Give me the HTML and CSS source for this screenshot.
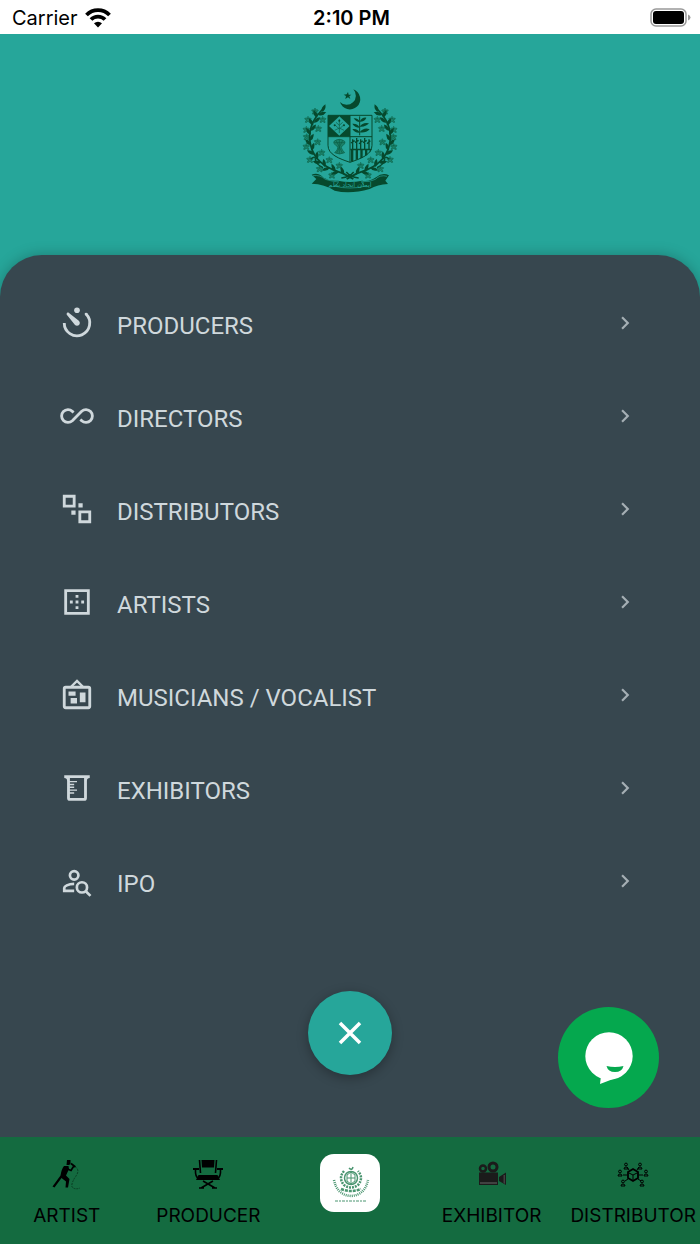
FILE: index.html
```html
<!DOCTYPE html>
<html lang="en">
<head>
    <meta charset="UTF-8">
    <meta name="viewport" content="width=device-width, initial-scale=1.0">
    <title>Menu</title>
    <link rel="stylesheet" href="styles.css">
</head>
<body>
    <div class="status-bar">
        <div class="carrier">
            <span>Carrier</span>
            <svg class="wifi" viewBox="0 0 26 20" aria-hidden="true">
                <path d="M1.500 7A16 16 0 0 1 24.500 7M6 11.500A9.800 9.800 0 0 1 20 11.500" fill="none" stroke="#000" stroke-width="3.800"/>
                <path d="M13 19.500L9 15.300A6 6 0 0 1 17 15.300Z"/>
            </svg>
        </div>
        <div class="clock">2:10 PM</div>
        <svg class="battery" viewBox="0 0 41 20" aria-hidden="true">
            <rect x="1" y="1" width="35" height="17" rx="5" fill="none" stroke="#999" stroke-width="1.500"/>
            <rect x="3" y="3" width="31" height="13" rx="3"/>
            <path d="M38 6.500Q40.500 7.500 40.500 9.500T38 12.500Z" fill="#999"/>
        </svg>
    </div>

    <header class="hero">
        <svg class="emblem" viewBox="30 21 300 330" role="img" aria-label="State emblem">
            <defs>
                <path id="leaf" d="M0 3Q10 -7 0 -22Q-10 -7 0 3Z"/>
                <path id="flower" d="M0 -3Q-4 -8 0 -11Q4 -8 0 -3Q6 -9 10 -4Q8 1 3 0Q9 3 7 8Q2 8 0 3Q-3 9 -8 7Q-8 2 -3 0Q-10 0 -10 -5Q-5 -8 0 -3Z" fill="#1b8269" stroke="#0b5c43" stroke-width="1.500"/>
                <g id="branch">
                    <use href="#flower" x="75" y="95"/>
                    <use href="#flower" x="54" y="120"/>
                    <use href="#flower" x="98" y="120"/>
                    <use href="#flower" x="85" y="147"/>
                    <use href="#flower" x="49" y="150"/>
                    <use href="#flower" x="83" y="187"/>
                    <use href="#flower" x="50" y="172"/>
                    <use href="#flower" x="49" y="201"/>
                    <use href="#flower" x="95" y="219"/>
                    <use href="#flower" x="60" y="240"/>
                    <use href="#flower" x="118" y="241"/>
                    <use href="#flower" x="89" y="268"/>
                    <use href="#flower" x="126" y="287"/>
                    <use href="#flower" x="148" y="258"/>
                    <path d="M102 84Q52 130 60 185Q68 242 126 268Q160 278 190 297" fill="none" stroke="#06492d" stroke-width="5"/>
                    <use href="#leaf" transform="translate(97 93) rotate(25)"/>
                    <use href="#leaf" transform="translate(88 104) rotate(70)"/>
                    <use href="#leaf" transform="translate(80 110) rotate(-25)"/>
                    <use href="#leaf" transform="translate(74 126) rotate(50)"/>
                    <use href="#leaf" transform="translate(68 134) rotate(-30)"/>
                    <use href="#leaf" transform="translate(64 150) rotate(40)"/>
                    <use href="#leaf" transform="translate(61 162) rotate(-35)"/>
                    <use href="#leaf" transform="translate(60 180) rotate(30)"/>
                    <use href="#leaf" transform="translate(61 193) rotate(-45)"/>
                    <use href="#leaf" transform="translate(65 209) rotate(20)"/>
                    <use href="#leaf" transform="translate(70 222) rotate(-60)"/>
                    <use href="#leaf" transform="translate(80 236) rotate(5)"/>
                    <use href="#leaf" transform="translate(90 248) rotate(-80)"/>
                    <use href="#leaf" transform="translate(104 258) rotate(-10)"/>
                    <use href="#leaf" transform="translate(116 265) rotate(-105)"/>
                    <use href="#leaf" transform="translate(134 271) rotate(-25)"/>
                    <use href="#leaf" transform="translate(144 275) rotate(-110)"/>
                    <use href="#leaf" transform="translate(160 281) rotate(-20)"/>
                </g>
            </defs>
            <g fill="#06492d">
                <path d="M190 28A31 31 0 1 1 150 66A25 25 0 1 0 190 28Z"/>
                <path d="M174 36L176 44L184 44L178 49L181 57L174 52L166 57L168 48L161 44L170 43Z"/>
                <use href="#branch"/>
                <use href="#branch" transform="translate(360 0) scale(-1 1)"/>
                <path d="M114 106H246V196C246 224 212 236 180 247C148 236 114 224 114 196Z" fill="#26a69a" stroke="#06492d" stroke-width="3"/>
                <path d="M114 106H180V169H114Z"/>
                <path d="M148 109L179 138L148 167L117 138Z" fill="#26a69a"/>
                <path d="M148 117V159M148 147L135 135M148 147L161 135M148 136L138 127M148 136L158 127M134 151L148 144L162 151" fill="none" stroke="#0b5c43" stroke-width="2"/>
                <circle cx="148" cy="122" r="3"/>
                <circle cx="134" cy="136" r="3"/>
                <circle cx="162" cy="136" r="3"/>
                <path d="M209 109V166" stroke="#06492d" stroke-width="3"/>
                <path d="M209 126Q198 126 191 115Q205 114 209 126ZM209 125Q216 111 229 113Q225 125 209 125ZM209 143Q194 143 187 131Q204 130 209 143ZM209 140Q219 125 237 130Q226 142 209 140ZM209 158Q194 159 187 147Q204 145 209 158ZM209 157Q222 141 239 148Q227 160 209 157Z"/>
                <path d="M180 106V246M114 170H246" stroke="#06492d" stroke-width="3"/>
                <path d="M132 184Q148 172 164 184Q168 191 153 201Q157 212 164 218Q148 226 134 218Q143 211 144 201Q128 191 132 184Z" fill="#1b8269"/>
                <path d="M132 184Q148 172 164 184Q168 191 153 201Q157 212 164 218Q148 226 134 218Q143 211 144 201Q128 191 132 184ZM138 181L157 219M158 181L140 219M148 178V221M133 188H164" fill="none" stroke="#0b5c43" stroke-width="2"/>
                <path d="M181 206H245V211H181ZM183 209H190V243L183 245ZM197 209H204V238L197 240ZM211 209H218V233L211 235ZM225 209H232V225L225 228ZM239 209H245V207L239 220Z"/>
                <path d="M188 207V178M200 207V174M212 207V178M224 207V174M237 207V178M183 189L194 182M195 187L206 181M207 191L218 182M219 188L230 181M231 191L241 182" fill="none" stroke="#06492d" stroke-width="4"/>
                <path d="M62 238Q76 225 76 238Q75 250 99 263M298 238Q284 225 284 238Q285 250 261 263M154 294Q180 291 191 276M206 294Q180 291 169 276" fill="none" stroke="#06492d" stroke-width="4"/>
                <path d="M65 284Q84 275 101 293Q120 305 144 302Q180 310 216 302Q239 306 258 292Q278 275 297 286L286 302L294 312Q263 313 239 327Q180 344 134 332Q104 312 65 311L79 297Z"/>
                <path d="M69 287Q91 284 106 298Q139 307 146 305L136 319Q180 329 224 319L214 305Q241 307 256 298Q271 283 291 289" fill="none" stroke="#26a69a" stroke-width="2"/>
            </g>
            <text class="motto" x="180" y="322" text-anchor="middle">ایمان اتحاد نظم</text>
        </svg>
    </header>

    <main class="panel">
        <nav class="menu" aria-label="Categories">
            <a class="menu-item" href="#producers">
                <svg class="icon" viewBox="0 0 24 24">
                    <path d="M3 12A9 9 0 1 0 18.400 5.700" fill="none" stroke="currentColor" stroke-width="2"/>
                    <circle cx="18.400" cy="5.700" r="1"/>
                    <circle cx="12" cy="3" r="2"/>
                    <path d="M4.940 6.350C4.550 5.960 4.550 5.320 4.940 4.930C5.330 4.540 5.960 4.540 6.350 4.930L13.070 10.310L13.420 10.590C14.200 11.370 14.200 12.640 13.420 13.420C12.640 14.200 11.370 14.200 10.590 13.420L10.310 13.070Z"/>
                </svg>
                <span class="label">PRODUCERS</span>
                <svg class="chevron" viewBox="0 0 24 24"><path d="M8.590 16.580L13.170 12L8.590 7.410L10 6L16 12L10 18Z"/></svg>
            </a>
            <a class="menu-item" href="#directors">
                <svg class="icon" viewBox="0 0 24 24">
                    <path d="M9.600 9.500L8.700 8.700A4.500 4.500 0 1 0 8.700 15.300L15.300 8.700A4.500 4.500 0 1 1 15.300 15.300L14.300 14.500" fill="none" stroke="currentColor" stroke-width="2"/>
                </svg>
                <span class="label">DIRECTORS</span>
                <svg class="chevron" viewBox="0 0 24 24"><path d="M8.590 16.580L13.170 12L8.590 7.410L10 6L16 12L10 18Z"/></svg>
            </a>
            <a class="menu-item" href="#distributors">
                <svg class="icon" viewBox="0 0 24 24">
                    <path d="M2 2H11V11H2V2M9 4H4V9H9V4M22 13V22H13V13H22M15 20H20V15H15V20M16 8V11H13V8H16M11 16H8V13H11V16Z" fill-rule="evenodd"/>
                </svg>
                <span class="label">DISTRIBUTORS</span>
                <svg class="chevron" viewBox="0 0 24 24"><path d="M8.590 16.580L13.170 12L8.590 7.410L10 6L16 12L10 18Z"/></svg>
            </a>
            <a class="menu-item" href="#artists">
                <svg class="icon" viewBox="0 0 24 24">
                    <path d="M9 11H7V13H9V11M13 15H11V17H13V15M19 5V19H5V5H19M21 3H3V21H21V3M17 11H15V13H17V11M13 7H11V9H13V7M13 11H11V13H13V11Z" fill-rule="evenodd"/>
                </svg>
                <span class="label">ARTISTS</span>
                <svg class="chevron" viewBox="0 0 24 24"><path d="M8.590 16.580L13.170 12L8.590 7.410L10 6L16 12L10 18Z"/></svg>
            </a>
            <a class="menu-item" href="#musicians">
                <svg class="icon" viewBox="0 0 24 24">
                    <rect x="3" y="6.500" width="18" height="14.500" rx="1" fill="none" stroke="currentColor" stroke-width="2"/>
                    <path d="M8 6L12 2L16 6" fill="none" stroke="currentColor" stroke-width="1.700"/>
                    <path d="M6 9.500H11V12.500H6ZM7.500 14.200H12V18H7.500ZM14 10.200H18V17.200H14Z"/>
                </svg>
                <span class="label">MUSICIANS / VOCALIST</span>
                <svg class="chevron" viewBox="0 0 24 24"><path d="M8.590 16.580L13.170 12L8.590 7.410L10 6L16 12L10 18Z"/></svg>
            </a>
            <a class="menu-item" href="#exhibitors">
                <svg class="icon" viewBox="0 0 24 24">
                    <path d="M3 3H21V5A2 2 0 0 0 19 7V19A2 2 0 0 1 17 21H7A2 2 0 0 1 5 19V7A2 2 0 0 0 3 5V3M7 5V7H12V8H7V9H10V10H7V11H10V12H7V13H12V14H7V15H10V16H7V19H17V5H7Z" fill-rule="evenodd"/>
                </svg>
                <span class="label">EXHIBITORS</span>
                <svg class="chevron" viewBox="0 0 24 24"><path d="M8.590 16.580L13.170 12L8.590 7.410L10 6L16 12L10 18Z"/></svg>
            </a>
            <a class="menu-item" href="#ipo">
                <svg class="icon" viewBox="0 0 24 24">
                    <g fill="none" stroke="currentColor" stroke-width="1.900">
                        <circle cx="10" cy="8" r="3"/>
                        <path d="M10 14C5.500 14 3 15.900 3 17V19H10"/>
                        <circle cx="15.500" cy="16.500" r="3.600"/>
                        <path d="M18.200 19.200L21.500 22.500"/>
                    </g>
                </svg>
                <span class="label">IPO</span>
                <svg class="chevron" viewBox="0 0 24 24"><path d="M8.590 16.580L13.170 12L8.590 7.410L10 6L16 12L10 18Z"/></svg>
            </a>
        </nav>
        <button class="close-button" type="button" aria-label="Close menu">
            <svg viewBox="0 0 24 24"><path d="M2 2L22 22M22 2L2 22" fill="none" stroke="#fff" stroke-width="3.500"/></svg>
        </button>
    </main>

    <button class="chat-button" type="button" aria-label="Open chat">
        <svg viewBox="0 0 48 52">
            <circle cx="24" cy="24" r="23.700" fill="#fff"/>
            <path d="M16 44L15 52L36 44Z" fill="#fff"/>
            <path d="M21.500 34Q30 36 38.500 34Q37 40 30 40T21.500 34Z" fill="#05a84e"/>
        </svg>
    </button>

    <nav class="tab-bar" aria-label="Main">
        <a class="tab" href="#artist">
            <svg class="tab-icon" viewBox="0 0 32 32">
                <path d="M16 2H19.500V6L18 7H15.500Z"/>
                <path d="M13 8H17.500L18 11L15 17.500L18.500 21L17 29.500H14.500L15 23.500L10.500 20L3.500 29.500L1.500 28.500L9.500 17.500Q10.500 11 13 8Z"/>
                <path d="M16.500 11L20 12.500L22.500 8.500M20 5.500L24.500 9" fill="none" stroke="#000" stroke-width="1.700"/>
                <path d="M24.500 9Q29 12 25 18Q20 25 21 29Q24 32 29 30" fill="none" stroke="#0a3d23" stroke-width="1" stroke-dasharray="2 1"/>
            </svg>
            <span>ARTIST</span>
        </a>
        <a class="tab" href="#producer">
            <svg class="tab-icon" viewBox="0 0 32 32">
                <path d="M9.500 2H22.500L22 9.500H10ZM6.500 17H25.500L28 22H4ZM1 10H7V12H1ZM25 10H31V12H25Z"/>
                <path d="M7.500 2L8.500 15M24.500 2L23.500 15M3.500 12Q3 19 7 21M28.500 12Q29 19 25 21M9 30L21 23M23 30L11 23M7 30H12M20 30H25" fill="none" stroke="#000" stroke-width="1.600"/>
            </svg>
            <span>PRODUCER</span>
        </a>
        <a class="tab tab-home" href="#home" aria-label="Home">
            <svg class="home-logo" viewBox="0 0 60 58">
                <g fill="none" stroke="#4a9570">
                    <circle cx="31" cy="24" r="6.500" stroke-width="1.500"/>
                    <path d="M27 21L31 18L35 21V27L31 30L27 27ZM27 24H35M31 18V30" stroke-width="1"/>
                    <path d="M24 17Q18 24 24 31Q31 36 38 31Q44 24 38 17" stroke-width="2.500" stroke-dasharray="2 1"/>
                    <path d="M21 35Q31 39 41 35" stroke-width="2.500" stroke-dasharray="3 1"/>
                    <path d="M14 26Q17 41 31 42Q45 41 48 26" stroke-width="2.500" stroke-dasharray="1 1"/>
                    <path d="M15 47H47" stroke-width="1" stroke-dasharray="3 1 2 1"/>
                    <path d="M29 14Q32 17 33 13" stroke-width="1.500"/>
                </g>
            </svg>
        </a>
        <a class="tab" href="#exhibitor">
            <svg class="tab-icon" viewBox="0 0 32 32">
                <g fill="#1b1b1b">
                    <path d="M3 14.500H22V27H3ZM23 19L30 14.500V27L23 23Z"/>
                    <circle cx="7" cy="10.500" r="3" fill="none" stroke="#1b1b1b" stroke-width="2.500"/>
                    <circle cx="17" cy="9" r="4" fill="none" stroke="#1b1b1b" stroke-width="3"/>
                    <path d="M4 24H21V26H4ZM27.500 17H29V26L27.500 25Z" fill="#414141"/>
                </g>
            </svg>
            <span>EXHIBITOR</span>
        </a>
        <a class="tab" href="#distributor">
            <svg class="tab-icon" viewBox="0 0 32 32">
                <defs>
                    <g id="person"><circle cx="0" cy="-1.500" r="1.400"/><path d="M-2 3Q-2 1 0 1T2 3Z"/></g>
                </defs>
                <g fill="none" stroke="#000">
                    <path d="M16 11L21 14V20L16 23L11 20V14Z" stroke-width="1.800"/>
                    <path d="M12 15L16 17L20 15M16 17V22M10 17H6M22 17H26M12 12L10 9M20 12L22 9M11 21L8 23M21 21L24 23" stroke-width="1"/>
                    <use href="#person" x="9" y="8"/>
                    <use href="#person" x="23" y="8"/>
                    <use href="#person" x="3" y="15"/>
                    <use href="#person" x="29" y="15"/>
                    <use href="#person" x="6" y="25"/>
                    <use href="#person" x="25" y="25"/>
                </g>
            </svg>
            <span>DISTRIBUTOR</span>
        </a>
    </nav>
</body>
</html>
```
FILE: styles.css
```css
* {
    box-sizing: border-box;
}

body {
    position: relative;
    display: flex;
    flex-direction: column;
    min-height: 100vh;
    margin: 0;
    overflow-x: hidden;
    font-family: Inter, "Liberation Sans", sans-serif;
    background-color: #26a69a;
}

a {
    color: inherit;
    text-decoration: none;
}

button {
    display: flex;
    align-items: center;
    justify-content: center;
    padding: 0;
    border: none;
    border-radius: 50%;
    cursor: pointer;
}

/* Status bar */
.status-bar {
    display: grid;
    grid-template-columns: 1fr auto 1fr;
    align-items: center;
    height: 34px;
    padding: 2px 9px 0 12px;
    font-size: 20px;
    color: #000;
    background-color: #fff;
}

.carrier {
    display: flex;
    align-items: center;
    gap: 7px;
}

.wifi {
    width: 26px;
    height: 20px;
}

.clock {
    font-weight: 600;
}

.battery {
    justify-self: end;
    width: 41px;
    height: 20px;
}

/* Header */
.hero {
    display: flex;
    justify-content: center;
    padding: 53px 0 58px;
}

.emblem {
    width: 100px;
    height: 110px;
}

.motto {
    font-family: "DejaVu Sans", sans-serif;
    font-size: 20px;
    fill: #26a69a;
}

/* Menu panel */
.panel {
    display: flex;
    flex: 1;
    flex-direction: column;
    align-items: center;
    padding: 21px 0 61px;
    border-radius: 42px 42px 0 0;
    background-color: #37474f;
    box-shadow: 0 0 14px rgba(0, 0, 0, 0.25);
}

.menu {
    width: 100%;
    margin-bottom: 64px;
    padding: 0 62px 0 60px;
}

.menu-item {
    display: flex;
    align-items: center;
    height: 93px;
    font-family: Roboto, sans-serif;
    font-size: 24px;
    line-height: 28px;
    color: #cfd8dc;
}

.icon {
    width: 34px;
    height: 34px;
    fill: currentColor;
}

.label {
    flex: 1;
    padding: 6px 0 0 23px;
}

.chevron {
    width: 26px;
    height: 26px;
    fill: #a5afb4;
}

.close-button {
    width: 84px;
    height: 84px;
    background-color: #26a69a;
    box-shadow: 0 3px 12px rgba(0, 0, 0, 0.3);
}

.close-button svg {
    width: 24px;
    height: 24px;
}

.chat-button {
    position: absolute;
    right: 41px;
    bottom: 136px;
    width: 101px;
    height: 101px;
    background-color: #05a84e;
}

.chat-button svg {
    width: 48px;
    height: 52px;
}

/* Bottom tabs */
.tab-bar {
    display: grid;
    grid-template-columns: repeat(5, 1fr);
    padding-bottom: 16px;
    margin: 0 -4px;
    background-color: #146b40;
}

.tab {
    display: flex;
    flex-direction: column;
    align-items: center;
    gap: 14px;
    padding-top: 21px;
    font-size: 19px;
    line-height: 24px;
    color: #000;
}

.tab-icon {
    width: 32px;
    height: 32px;
}

.tab-home {
    padding-top: 17px;
}

.home-logo {
    width: 60px;
    height: 58px;
    border-radius: 14px;
    background-color: #fff;
}
```
